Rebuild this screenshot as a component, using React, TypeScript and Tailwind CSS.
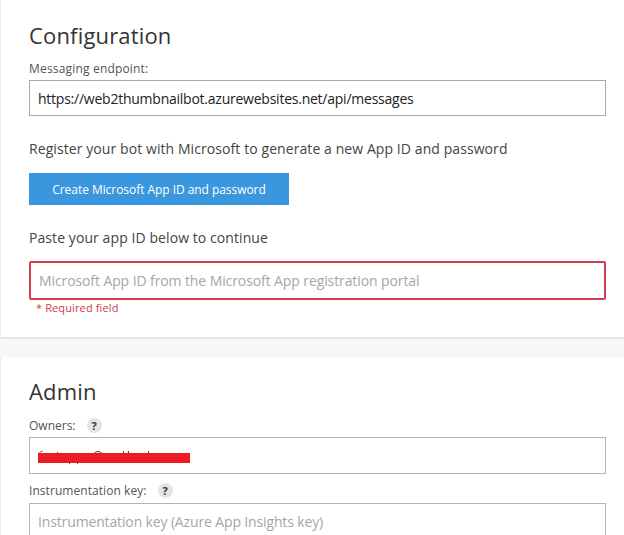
function Help() {
  return (
    <span className="flex h-[15px] w-[15px] items-center justify-center rounded-full bg-[#e4e4e4] text-[11px] font-bold leading-[15px] text-[#333]">
      ?
    </span>
  );
}

export default function App() {
  return (
    <main className="h-[535px] w-[624px] overflow-hidden bg-[#f7f7f7] font-['Open_Sans','Noto_Sans',sans-serif] text-[#444]">
      <section className="h-[339px] border-b-2 border-l border-b-[#e6e6e6] border-l-[#efefef] bg-white pl-7 pr-[18px] pt-[19px]">
        <h2 className="h-8 text-[22px] leading-8 tracking-[0.17px] whitespace-nowrap text-[#333]">Configuration</h2>
        <div className="mt-[9px] h-[17px] text-[12px] leading-[17px] tracking-[0.18px] whitespace-nowrap text-[#555]">
          <span>Messaging endpoint:</span>
        </div>
        <div className="mt-[3px] flex h-9 items-center border border-[#aaa] pl-2 text-[14px] tracking-[-0.24px] whitespace-nowrap text-[#222]">
          <span>https://web2thumbnailbot.azurewebsites.net/api/messages</span>
        </div>
        <p className="mt-[23px] h-5 text-[14px] leading-5 tracking-[0.08px] whitespace-nowrap">
          <span>Register your bot with Microsoft to generate a new App ID and password</span>
        </p>
        <button className="mt-[14px] flex h-8 w-[260px] items-center justify-center bg-[#3a96dd] pt-[2px] text-[12px] font-medium tracking-[-0.05px] whitespace-nowrap text-white">
          <span>Create Microsoft App ID and password</span>
        </button>
        <p className="mt-[23px] h-5 text-[14px] leading-5 tracking-[0.08px] whitespace-nowrap">
          <span>Paste your app ID below to continue</span>
        </p>
        <div className="mt-[13px] flex h-[39px] items-center rounded-[2px] border-2 border-[#d13c4f] pl-2 text-[14px] tracking-[-0.1px] whitespace-nowrap text-[#a6a6a6]">
          <span>Microsoft App ID from the Microsoft App registration portal</span>
        </div>
        <p className="h-4 pl-[7px] text-[11px] leading-4 tracking-[0.12px] whitespace-nowrap text-[#d13c4f]">
          <span>* Required field</span>
        </p>
      </section>

      <section className="mt-[18px] h-[178px] border-l border-[#efefef] bg-white pl-7 pr-[18px] pt-[18px]">
        <h2 className="h-8 text-[22px] leading-8 tracking-[0.2px] whitespace-nowrap text-[#333]">Admin</h2>
        <div className="mt-[10px] flex h-[17px] items-center gap-[11px] text-[12px] leading-[17px] whitespace-nowrap text-[#555]">
          <span>Owners:</span>
          <Help />
        </div>
        <div className="mt-[3px] flex h-[37px] items-center border border-[#b5b5b5] pl-2">
          {/* Redaction stroke with the tips of the covered letters */}
          <svg width="152" height="16" viewBox="0 0 152 16" className="mt-1">
            <g stroke="#444" strokeWidth="1" fill="none">
              <path d="M2 4V2.5Q2.5 1 4.5 1.2M19.5 2v2M56 3.5Q60 -.5 64 3.5M85.500 1v3M90.500 1v3M110.500 1v3M31.500 12v2M39.500 12v2" />
            </g>
            <rect y="3" width="152" height="10" fill="#ed1c24" />
          </svg>
        </div>
        <div className="mt-2 flex h-[17px] items-center gap-[11px] text-[12px] leading-[17px] tracking-[0.06px] whitespace-nowrap text-[#555]">
          <span>Instrumentation key:</span>
          <Help />
        </div>
        <div className="mt-1 flex h-[37px] items-center border border-[#b5b5b5] pl-2 text-[14px] tracking-[-0.14px] whitespace-nowrap text-[#a6a6a6]">
          <span>Instrumentation key (Azure App Insights key)</span>
        </div>
      </section>
    </main>
  );
}
